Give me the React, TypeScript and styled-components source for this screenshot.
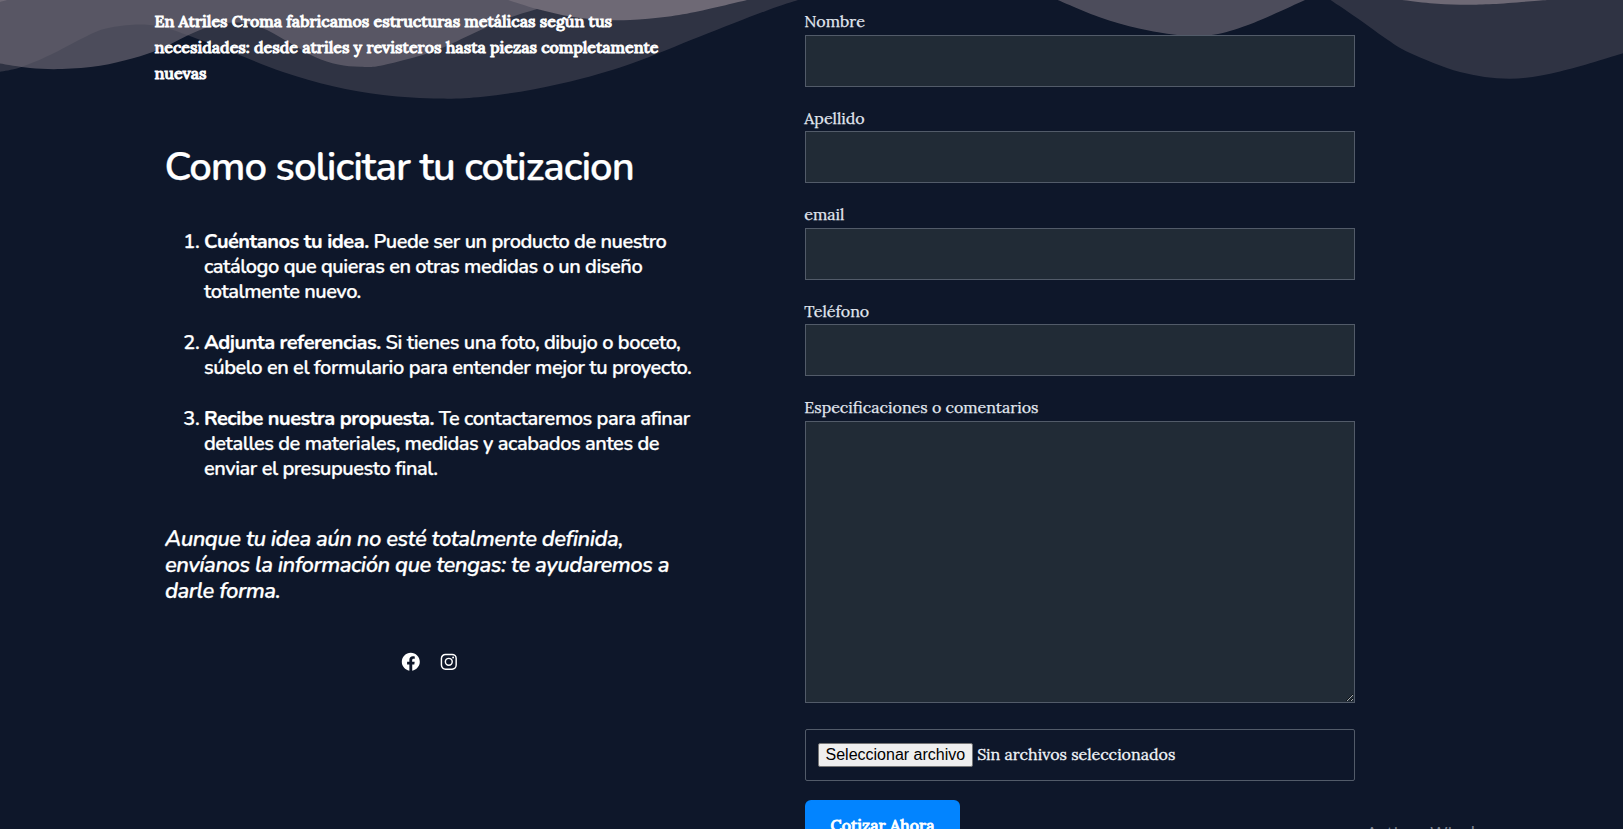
import React from "react";
import styled, { createGlobalStyle } from "styled-components";

const colors = {
  page: "#0e172a",
  wave: "#6e6975",
  field: "#212b36",
  border: "#525b69",
  label: "#e2e8f0",
  accent: "#0284ff",
};

const sans = `Nunito, Lato, "Open Sans", sans-serif`;
const serif = `Lora, "Liberation Serif", serif`;

const GlobalStyle = createGlobalStyle`
  *, *::before, *::after { box-sizing: border-box; }
  html, body { margin: 0; padding: 0; background: ${colors.page}; }
`;

const Page = styled.main`
  position: relative;
  height: 829px;
  overflow: hidden;
  background: ${colors.page};
  color: #fff;
`;

const WaveLayer = styled.svg`
  position: absolute;
  top: 0;
  left: 0;
  display: block;
`;

const Columns = styled.div`
  position: relative;
  display: grid;
  grid-template-columns: 540.5px 550px;
  column-gap: 110px;
  align-items: start;
  padding: 8px 0 0 154.5px;
`;

const Intro = styled.p`
  margin: 0;
  max-width: 520px;
  font: 500 16px/26px ${serif};
  -webkit-text-stroke: 0.9px #fff;
`;

const Guide = styled.section`
  display: flex;
  flex-direction: column;
  padding-left: 10.5px;
  margin-top: 57px;
  font-family: ${sans};
  font-weight: 600;
  -webkit-text-stroke: 0.25px #fff;
`;

const Title = styled.h2`
  margin: 0 0 0 -0.5px;
  font-size: 40px;
  font-weight: 600;
  letter-spacing: -0.025em;
  line-height: 48px;
`;

const Steps = styled.ol`
  margin: 38px 0 0;
  padding-left: 39px;
  font-size: 20px;
  letter-spacing: -0.0232em;
  line-height: 25.2px;
`;

const Step = styled.li`
  & + & {
    margin-top: 25.4px;
  }
`;

const Lead = styled.strong`
  font-weight: 700;
`;

const Note = styled.p`
  margin: 45px 0 0;
  font-size: 22px;
  font-style: italic;
  letter-spacing: -0.0232em;
  line-height: 26px;
`;

const Socials = styled.nav`
  display: flex;
  justify-content: center;
  gap: 16.4px;
  margin-top: 46.6px;
`;

const SocialIcon = styled.svg`
  display: block;
  width: 21.6px;
  height: 21.6px;
`;

const Form = styled.form`
  display: flex;
  flex-direction: column;
  align-items: stretch;
  font: 400 16px/26px ${serif};
`;

const Field = styled.label`
  display: flex;
  flex-direction: column;
  height: 96.6px;
  color: ${colors.label};
`;

const Caption = styled.span`
  height: 26.7px;
  margin-left: -0.7px;
  -webkit-text-stroke: 0.25px ${colors.label};
`;

const Input = styled.input`
  height: 52px;
  padding: 0 12px;
  border: 1px solid ${colors.border};
  border-radius: 0;
  background: ${colors.field};
  color: #fff;
  font: inherit;
  outline: none;
`;

const CommentField = styled(Field)`
  height: auto;
`;

const TextArea = styled.textarea`
  display: block;
  height: 282px;
  padding: 12px;
  border: 1px solid ${colors.border};
  background: ${colors.field};
  color: #fff;
  font: inherit;
  outline: none;
  resize: vertical;
`;

const FileBox = styled.div`
  display: flex;
  align-items: center;
  gap: 4.5px;
  height: 52px;
  margin-top: 26px;
  padding: 0 12px;
  border: 1px solid ${colors.border};
  border-radius: 2px;
  color: #f1f5f9;
`;

const FileButton = styled.button`
  height: 24px;
  padding: 0 6.5px;
  border: 1px solid #767676;
  border-radius: 2px;
  background: #efefef;
  color: #000;
  font: 16px/20px "Liberation Sans", Arial, sans-serif;
  white-space: nowrap;
`;

const FileStatus = styled.span`
  padding-bottom: 2px;
  -webkit-text-stroke: 0.3px #f1f5f9;
`;

const Submit = styled.button`
  align-self: flex-start;
  width: 155px;
  height: 52px;
  margin-top: 19px;
  padding: 0 0 2px;
  border: 0;
  border-radius: 6px;
  background: ${colors.accent};
  color: #fff;
  font: 500 16px/26px ${serif};
  -webkit-text-stroke: 0.8px #fff;
`;

const Watermark = styled.div`
  position: absolute;
  top: 820px;
  left: 1366px;
  color: #7d828e;
  font: 18.7px/26px "Open Sans", sans-serif;
  white-space: nowrap;
`;

type Point = [number, number];

/* Builds a closed shape whose lower edge runs smoothly through the points. */
function wavePath(points: Point[]): string {
  const at = (i: number) => points[Math.max(0, Math.min(points.length - 1, i))];
  let d = `M${points[0][0]} -4L${points[0].join(" ")}`;
  for (let i = 0; i < points.length - 1; i++) {
    const [p0, p1, p2, p3] = [at(i - 1), at(i), at(i + 1), at(i + 2)];
    d += `C${p1[0] + (p2[0] - p0[0]) / 6} ${p1[1] + (p2[1] - p0[1]) / 6} ${
      p2[0] - (p3[0] - p1[0]) / 6
    } ${p2[1] - (p3[1] - p1[1]) / 6} ${p2[0]} ${p2[1]}`;
  }
  return `${d}V-4Z`;
}

const waves: { opacity: number; edges: Point[][] }[] = [
  {
    opacity: 0.34,
    edges: [
      [[0, 71.7], [20, 67.5], [50, 55], [83, 38], [104, 29], [133, 24.7], [160, 26.5], [187, 35], [233, 52.5],
        [283, 72], [333, 86.3], [383, 95], [440, 98.6], [483, 96.7], [533, 89.5], [583, 78.3], [633, 63],
        [700, 36.5], [767, 10.5], [798, 0]],
      [[1330.5, 0], [1360, 20], [1385, 38], [1410, 53], [1460, 72], [1510, 78.8], [1560, 71.5], [1623, 53.3]],
    ],
  },
  {
    opacity: 0.66,
    edges: [
      [[0, 63.5], [30, 68], [62, 69], [100, 65.7], [133, 58.3], [160, 49], [187, 35.7], [210, 26.5], [232, 22.5],
        [250, 24], [267, 30], [290, 43], [315, 57], [338, 64.5], [360, 66.7], [383, 65.2], [433, 51.5], [470, 35],
        [503, 20], [537, 9], [570, 0]],
      [[1057.6, 0], [1099, 17], [1139, 28.5], [1175, 34.7], [1195, 35.6], [1218, 34], [1254, 22.7], [1305, 0]],
    ],
  },
  {
    opacity: 1,
    edges: [
      [[0, 2], [7, 0]],
      [[508, 0], [537, 9], [570, 16.5], [600, 19.7], [630, 20], [667, 16.7], [700, 11], [747, 0]],
      [[1402, 0], [1430, 3.2], [1460, 4.7], [1493, 4], [1547, 0]],
    ],
  },
];

const steps = [
  { lead: "Cuéntanos tu idea.", text: "Puede ser un producto de nuestro catálogo que quieras en otras medidas o un diseño totalmente nuevo." },
  { lead: "Adjunta referencias.", text: "Si tienes una foto, dibujo o boceto, súbelo en el formulario para entender mejor tu proyecto." },
  { lead: "Recibe nuestra propuesta.", text: "Te contactaremos para afinar detalles de materiales, medidas y acabados antes de enviar el presupuesto final." },
];

const fields = [
  { label: "Nombre", type: "text" },
  { label: "Apellido", type: "text" },
  { label: "email", type: "email" },
  { label: "Teléfono", type: "tel" },
];

function Waves() {
  return (
    <WaveLayer width="1623" height="110" viewBox="0 0 1623 110" aria-hidden="true">
      {waves.map((wave) => (
        <path key={wave.opacity} fill={colors.wave} fillOpacity={wave.opacity} d={wave.edges.map(wavePath).join("")} />
      ))}
    </WaveLayer>
  );
}

function SocialLinks() {
  return (
    <Socials>
      <SocialIcon viewBox="0 0 24 24" fill="#fff" aria-label="Facebook">
        <path d="M12 2C6.5 2 2 6.5 2 12c0 5 3.7 9.1 8.4 9.9v-7H7.9V12h2.5V9.8c0-2.5 1.5-3.9 3.8-3.9 1.1 0 2.2.2 2.2.2v2.5h-1.3c-1.2 0-1.6.8-1.6 1.6V12h2.8l-.4 2.9h-2.3v7C18.3 21.1 22 17 22 12c0-5.5-4.5-10-10-10z" />
      </SocialIcon>
      <SocialIcon viewBox="0 0 24 24" fill="none" stroke="#fff" strokeWidth="1.62" aria-label="Instagram">
        <rect x="3.81" y="3.81" width="16.38" height="16.38" rx="4.5" />
        <circle cx="12" cy="12" r="3.81" />
        <circle cx="16.8" cy="7.2" r="1.08" fill="#fff" stroke="none" />
      </SocialIcon>
    </Socials>
  );
}

export default function App() {
  return (
    <>
      <GlobalStyle />
      <Page>
        <Waves />
        <Columns>
          <div>
            <Intro>
              En Atriles Croma fabricamos estructuras metálicas según tus necesidades: desde atriles y revisteros hasta
              piezas completamente nuevas
            </Intro>
            <Guide>
              <Title>Como solicitar tu cotizacion</Title>
              <Steps>
                {steps.map((step) => (
                  <Step key={step.lead}>
                    <Lead>{step.lead}</Lead> {step.text}
                  </Step>
                ))}
              </Steps>
              <Note>
                Aunque tu idea aún no esté totalmente definida, envíanos la información que tengas: te ayudaremos a
                darle forma.
              </Note>
              <SocialLinks />
            </Guide>
          </div>
          <Form>
            {fields.map((field) => (
              <Field key={field.label}>
                <Caption>{field.label}</Caption>
                <Input type={field.type} />
              </Field>
            ))}
            <CommentField>
              <Caption>Especificaciones o comentarios</Caption>
              <TextArea />
            </CommentField>
            <FileBox>
              <FileButton type="button">Seleccionar archivo</FileButton>
              <FileStatus>Sin archivos seleccionados</FileStatus>
            </FileBox>
            <Submit type="button">Cotizar Ahora</Submit>
          </Form>
        </Columns>
        <Watermark>Activar Windows</Watermark>
      </Page>
    </>
  );
}
